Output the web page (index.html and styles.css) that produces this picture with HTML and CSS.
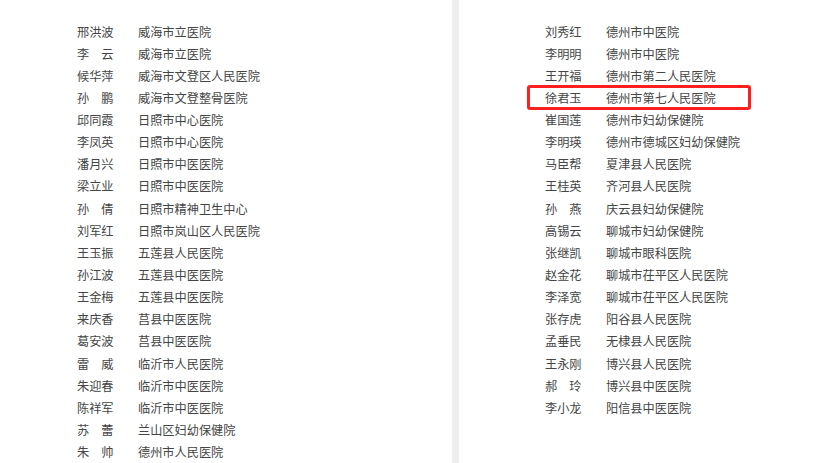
FILE: index.html
```html
<!DOCTYPE html>
<html lang="zh">
<head>
<meta charset="utf-8">
<title>名单</title>
<link rel="stylesheet" href="styles.css">
</head>
<body>
<div class="spread">
  <div class="page page-left">
    <div class="row"><span class="name">邢洪波</span><span class="org">威海市立医院</span></div>
    <div class="row"><span class="name">李　云</span><span class="org">威海市立医院</span></div>
    <div class="row"><span class="name">候华萍</span><span class="org">威海市文登区人民医院</span></div>
    <div class="row"><span class="name">孙　鹏</span><span class="org">威海市文登整骨医院</span></div>
    <div class="row"><span class="name">邱同霞</span><span class="org">日照市中心医院</span></div>
    <div class="row"><span class="name">李凤英</span><span class="org">日照市中心医院</span></div>
    <div class="row"><span class="name">潘月兴</span><span class="org">日照市中医医院</span></div>
    <div class="row"><span class="name">梁立业</span><span class="org">日照市中医医院</span></div>
    <div class="row"><span class="name">孙　倩</span><span class="org">日照市精神卫生中心</span></div>
    <div class="row"><span class="name">刘军红</span><span class="org">日照市岚山区人民医院</span></div>
    <div class="row"><span class="name">王玉振</span><span class="org">五莲县人民医院</span></div>
    <div class="row"><span class="name">孙江波</span><span class="org">五莲县中医医院</span></div>
    <div class="row"><span class="name">王金梅</span><span class="org">五莲县中医医院</span></div>
    <div class="row"><span class="name">来庆香</span><span class="org">莒县中医医院</span></div>
    <div class="row"><span class="name">葛安波</span><span class="org">莒县中医医院</span></div>
    <div class="row"><span class="name">雷　威</span><span class="org">临沂市人民医院</span></div>
    <div class="row"><span class="name">朱迎春</span><span class="org">临沂市中医医院</span></div>
    <div class="row"><span class="name">陈祥军</span><span class="org">临沂市中医医院</span></div>
    <div class="row"><span class="name">苏　蕾</span><span class="org">兰山区妇幼保健院</span></div>
    <div class="row"><span class="name">朱　帅</span><span class="org">德州市人民医院</span></div>
  </div>
  <div class="divider"></div>
  <div class="page page-right">
    <div class="row"><span class="name">刘秀红</span><span class="org">德州市中医院</span></div>
    <div class="row"><span class="name">李明明</span><span class="org">德州市中医院</span></div>
    <div class="row"><span class="name">王开福</span><span class="org">德州市第二人民医院</span></div>
    <div class="row marked"><span class="name">徐君玉</span><span class="org">德州市第七人民医院</span></div>
    <div class="row"><span class="name">崔国莲</span><span class="org">德州市妇幼保健院</span></div>
    <div class="row"><span class="name">李明瑛</span><span class="org">德州市德城区妇幼保健院</span></div>
    <div class="row"><span class="name">马臣帮</span><span class="org">夏津县人民医院</span></div>
    <div class="row"><span class="name">王桂英</span><span class="org">齐河县人民医院</span></div>
    <div class="row"><span class="name">孙　燕</span><span class="org">庆云县妇幼保健院</span></div>
    <div class="row"><span class="name">高锡云</span><span class="org">聊城市妇幼保健院</span></div>
    <div class="row"><span class="name">张继凯</span><span class="org">聊城市眼科医院</span></div>
    <div class="row"><span class="name">赵金花</span><span class="org">聊城市茌平区人民医院</span></div>
    <div class="row"><span class="name">李泽宽</span><span class="org">聊城市茌平区人民医院</span></div>
    <div class="row"><span class="name">张存虎</span><span class="org">阳谷县人民医院</span></div>
    <div class="row"><span class="name">孟垂民</span><span class="org">无棣县人民医院</span></div>
    <div class="row"><span class="name">王永刚</span><span class="org">博兴县人民医院</span></div>
    <div class="row"><span class="name">郝　玲</span><span class="org">博兴县中医医院</span></div>
    <div class="row"><span class="name">李小龙</span><span class="org">阳信县中医医院</span></div>
  </div>
</div>
</body>
</html>
```
FILE: styles.css
```css
html, body {
  margin: 0;
  padding: 0;
  background: #ffffff;
}

.spread {
  display: flex;
  width: 830px;
  height: 463px;
  overflow: hidden;
  font-family: "Noto Sans CJK SC", "Noto Sans", sans-serif;
  font-size: 12.2px;
  color: #454545;
}

.page {
  display: flex;
  flex-direction: column;
  padding-top: 20.5px;
  box-sizing: border-box;
}

.page-left {
  width: 452px;
  padding-left: 77px;
}

.divider {
  width: 7px;
  flex: none;
  background: #eeeeee;
}

.page-right {
  flex: 1;
  padding-left: 86px;
}

.row {
  position: relative;
  display: flex;
  height: 22.15px;
  line-height: 22.15px;
  white-space: nowrap;
}

.name {
  width: 61px;
  flex: none;
}

.row.marked::after {
  content: "";
  position: absolute;
  left: -18px;
  width: 224px;
  top: -2px;
  height: 25px;
  box-sizing: border-box;
  border: 3px solid #ff1f1f;
  border-radius: 3px;
}
```
